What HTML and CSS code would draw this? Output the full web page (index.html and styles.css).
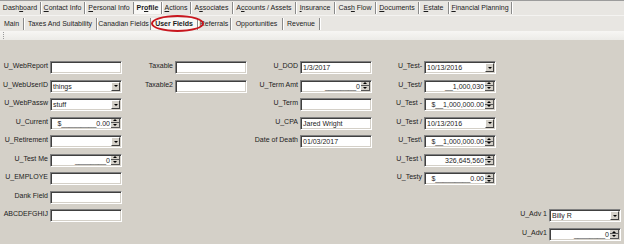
FILE: index.html
```html
<!DOCTYPE html>
<html lang="en">
  <head>
    <meta charset="UTF-8" />
    <meta name="viewport" content="width=device-width, initial-scale=1.0" />
    <title>User Fields</title>
    <link rel="stylesheet" href="styles.css">
  </head>

  <body>
    <div class="tab-row main-tabs">
      <span class="tab">Dash<u>b</u>oard</span>
      <span class="tab"><u>C</u>ontact Info</span>
      <span class="tab"><u>P</u>ersonal Info</span>
      <span class="tab active">Pr<u>o</u>file</span>
      <span class="tab"><u>A</u>ctions</span>
      <span class="tab">A<u>s</u>sociates</span>
      <span class="tab">A<u>c</u>counts / Assets</span>
      <span class="tab"><u>I</u>nsurance</span>
      <span class="tab">Cas<u>h</u> Flow</span>
      <span class="tab"><u>D</u>ocuments</span>
      <span class="tab"><u>E</u>state</span>
      <span class="tab"><u>F</u>inancial Planning</span>
    </div>
    <div class="tab-row sub-tabs">
      <span class="tab">Main</span>
      <span class="tab">Taxes And Suitability</span>
      <span class="tab">Canadian Fields</span>
      <span class="tab active">User Fields</span>
      <span class="tab">Referrals</span>
      <span class="tab">Opportunities</span>
      <span class="tab">Revenue</span>
      <span class="ring"></span>
    </div>
    <div class="toolbar"><span class="grip"></span></div>

    <div class="form">
      <!-- колонка 1 -->
      <div class="col col1">
        <div class="field"><label>U_WebReport</label><div class="ctl"></div></div>
        <div class="field"><label>U_WebUserID</label><div class="ctl"><span class="val">things</span><span class="drop"></span></div></div>
        <div class="field"><label>U_WebPassw</label><div class="ctl"><span class="val">stuff</span><span class="drop"></span></div></div>
        <div class="field"><label>U_Current</label><div class="ctl num"><span class="val">$_________0.00</span><span class="spin"><i></i><i></i></span></div></div>
        <div class="field"><label>U_Retirement</label><div class="ctl"><span class="val"></span><span class="drop"></span></div></div>
        <div class="field"><label>U_Test Me</label><div class="ctl num"><span class="val">________0</span><span class="spin"><i></i><i></i></span></div></div>
        <div class="field"><label>U_EMPLOYE</label><div class="ctl"></div></div>
        <div class="field"><label>Dank Field</label><div class="ctl"></div></div>
        <div class="field"><label>ABCDEFGHIJ</label><div class="ctl"></div></div>
      </div>

      <!-- колонка 2 -->
      <div class="col col2">
        <div class="field"><label>Taxable</label><div class="ctl"></div></div>
        <div class="field"><label>Taxable2</label><div class="ctl"></div></div>
      </div>

      <!-- колонка 3 -->
      <div class="col col3">
        <div class="field"><label>U_DOD</label><div class="ctl"><span class="val">1/3/2017</span></div></div>
        <div class="field"><label>U_Term Amt</label><div class="ctl num"><span class="val">________0</span><span class="spin"><i></i><i></i></span></div></div>
        <div class="field"><label>U_Term</label><div class="ctl"></div></div>
        <div class="field"><label>U_CPA</label><div class="ctl"><span class="val">Jared Wright</span></div></div>
        <div class="field"><label>Date of Death</label><div class="ctl"><span class="val">01/03/2017</span></div></div>
      </div>

      <!-- колонка 4 -->
      <div class="col col4">
        <div class="field"><label>U_Test-</label><div class="ctl"><span class="val">10/13/2016</span><span class="drop"></span></div></div>
        <div class="field"><label>U_Test/</label><div class="ctl num"><span class="val">__1,000,030</span><span class="spin"><i></i><i></i></span></div></div>
        <div class="field"><label>U_Test -</label><div class="ctl num"><span class="val">$__1,000,000.00</span><span class="spin"><i></i><i></i></span></div></div>
        <div class="field"><label>U_Test /</label><div class="ctl"><span class="val">10/13/2016</span><span class="drop"></span></div></div>
        <div class="field"><label>U_Test\</label><div class="ctl num"><span class="val">$__1,000,000.00</span><span class="spin"><i></i><i></i></span></div></div>
        <div class="field"><label>U_Test \</label><div class="ctl num"><span class="val">326,645,560</span><span class="spin"><i></i><i></i></span></div></div>
        <div class="field"><label>U_Testy</label><div class="ctl num"><span class="val">$_________0.00</span><span class="spin"><i></i><i></i></span></div></div>
      </div>

      <!-- колонка 5, начинается с 9-й строки -->
      <div class="col col5">
        <div class="field"><label>U_Adv 1</label><div class="ctl"><span class="val">Billy R</span><span class="drop"></span></div></div>
        <div class="field"><label>U_Adv1</label><div class="ctl num"><span class="val">________0</span><span class="spin"><i></i><i></i></span></div></div>
      </div>
    </div>
  </body>
</html>
```

FILE: styles.css
```css
body {
  margin: 0;
  width: 624px;
  height: 244px;
  overflow: hidden;
  background-color: #d4d0c8;
  font-family: "Liberation Sans", Arial, sans-serif;
  font-size: 7px;
  color: #1c1c1c;
}

.tab-row {
  display: grid;
  align-items: center;
  box-sizing: border-box;
  background-color: #e8e6e2;
}

.main-tabs {
  grid-template-columns: 41px 44px 49px 28px 29px 42px 63px 39px 41px 43px 30px 63px 1fr;
  height: 16px;
  border-top: 1px solid #9c9c9c;
  border-bottom: 1px solid #f4f3f1;
}

.sub-tabs {
  position: relative;
  grid-template-columns: 24px 73px 54px 47px 33px 52px 37px 1fr;
  height: 15px;
}

.tab {
  box-sizing: border-box;
  height: 12px;
  line-height: 12px;
  text-align: center;
  white-space: nowrap;
  border-right: 1px solid #8a8a8a;
  box-shadow: 1px 0 0 #fff;
}

.tab.active {
  font-weight: bold;
  background-color: #f8f7f5;
}

/* красный овал вокруг вкладки */
.ring {
  position: absolute;
  left: 151px;
  top: -1px;
  width: 53px;
  height: 17px;
  box-sizing: border-box;
  border: 2px solid #c8161e;
  border-radius: 50%;
}

.toolbar {
  display: flex;
  height: 9px;
  padding-left: 3px;
  background: linear-gradient(#f7f6f4, #ecebe7);
}

.grip {
  width: 1px;
  height: 8px;
  margin-top: 1px;
  background: repeating-linear-gradient(#9a9a9a 0 1px, transparent 1px 2px);
}

.form {
  display: flex;
  padding-top: 21px;
}

.col {
  display: flex;
  flex-direction: column;
}

.col5 {
  padding-top: 148.4px;
}

.field {
  display: flex;
  height: 18.55px;
}

.field label {
  box-sizing: border-box;
  padding-right: 2px;
  padding-top: 1px;
  line-height: 8px;
  text-align: right;
  white-space: nowrap;
}

.col1 label { width: 50px; }
.col2 label { width: 53px; }
.col3 label { width: 53px; }
.col4 label { width: 52px; }
.col5 label { width: 53px; }

.ctl {
  display: flex;
  align-items: center;
  box-sizing: border-box;
  width: 72px;
  height: 13px;
  background-color: #fff;
  border: 1px solid;
  border-color: #808080 #fff #fff #808080;
  box-shadow: inset 1px 1px 0 #404040, inset -1px -1px 0 #d4d0c8;
}

.val {
  flex: 1;
  padding: 0 2px;
  line-height: 11px;
  white-space: nowrap;
  overflow: hidden;
}

.num .val {
  text-align: right;
  padding-right: 1px;
}

.drop {
  display: flex;
  align-items: center;
  justify-content: center;
  box-sizing: border-box;
  width: 9px;
  height: 9px;
  margin-right: 1px;
  background-color: #d4d0c8;
  border: 1px solid;
  border-color: #fff #404040 #404040 #fff;
}

.drop::after {
  content: "";
  border-left: 2px solid transparent;
  border-right: 2px solid transparent;
  border-top: 2px solid #000;
}

.spin {
  display: flex;
  flex-direction: column;
  width: 9px;
  height: 9px;
  margin-right: 1px;
}

.spin i {
  display: flex;
  align-items: center;
  justify-content: center;
  flex: 1;
  box-sizing: border-box;
  background-color: #d4d0c8;
  border: 1px solid;
  border-width: 0 1px 1px 0;
  border-color: #555;
}

.spin i:first-child::after {
  content: "";
  border-left: 2px solid transparent;
  border-right: 2px solid transparent;
  border-bottom: 2px solid #000;
}

.spin i:last-child::after {
  content: "";
  border-left: 2px solid transparent;
  border-right: 2px solid transparent;
  border-top: 2px solid #000;
}
```
